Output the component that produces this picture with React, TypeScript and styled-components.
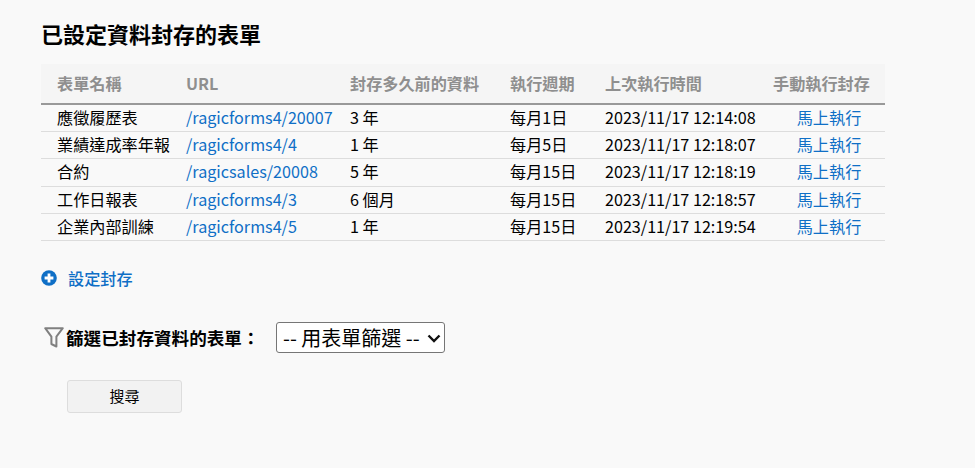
import styled, { createGlobalStyle } from "styled-components";

const GlobalStyle = createGlobalStyle`
  html, body {
    margin: 0;
    background: #f9f9f9;
  }
  body {
    font-family: "Noto Sans CJK TC", "Noto Sans", sans-serif;
    font-size: 16.15px;
    color: #000;
  }
`;

const Page = styled.div`
  width: 975px;
  height: 468px;
  padding: 20px 0 0 41px;
  box-sizing: border-box;
  overflow: hidden;
`;

const Heading = styled.h2`
  margin: 0 0 18px;
  font-size: 22px;
  font-weight: 700;
  line-height: 26px;
`;

const ArchiveTable = styled.table`
  width: 844px;
  table-layout: fixed;
  border-collapse: collapse;
`;

const HeadCell = styled.th<{ $width: number }>`
  width: ${(p) => p.$width}px;
  height: 40px;
  padding: 0 0 2px 16px;
  box-sizing: border-box;
  background: #f5f5f5;
  border-bottom: 2px solid #999;
  color: #8f8f8f;
  font-weight: 700;
  text-align: left;
  white-space: nowrap;
`;

const Cell = styled.td<{ $center?: boolean }>`
  height: 27.25px;
  padding: 0 0 1px 16px;
  box-sizing: border-box;
  border-bottom: 1px solid #ddd;
  line-height: 25px;
  white-space: nowrap;
  text-align: ${(p) => (p.$center ? "center" : "left")};
`;

const TableLink = styled.a`
  color: #0f6fc6;
  text-decoration: none;
`;

const AddLink = styled.a`
  display: flex;
  align-items: center;
  gap: 11px;
  margin-top: 25px;
  color: #0f6fc6;
  font-weight: 500;
  line-height: 24px;
  text-decoration: none;
`;

const FilterRow = styled.div`
  display: flex;
  align-items: center;
  margin: 32px 0 0 3px;
`;

const FilterLabel = styled.label`
  margin-left: 2px;
  width: 210px;
  font-size: 17.6px;
  font-weight: 700;
`;

const SelectWrap = styled.div`
  position: relative;
  width: 169px;
  height: 31px;
`;

const FormSelect = styled.select`
  appearance: none;
  width: 100%;
  height: 100%;
  padding: 0 0 0 6px;
  box-sizing: border-box;
  background: #fff;
  border: 1px solid #767676;
  border-radius: 3px;
  color: #000;
  font-family: inherit;
  font-size: 20px;
`;

const Chevron = styled.svg`
  position: absolute;
  top: 12px;
  right: 4px;
  pointer-events: none;
`;

const SearchButton = styled.button`
  display: block;
  width: 115px;
  height: 33px;
  margin: 27px 0 0 26px;
  padding: 0 0 2px;
  background: #f2f2f2;
  border: 1px solid #ddd;
  border-radius: 3px;
  color: #000;
  font-family: inherit;
  font-size: 15px;
`;

const columns = [
  { label: "表單名稱", width: 129 },
  { label: "URL", width: 164 },
  { label: "封存多久前的資料", width: 160 },
  { label: "執行週期", width: 95 },
  { label: "上次執行時間", width: 168 },
  { label: "手動執行封存", width: 128 },
];

const rows = [
  { name: "應徵履歷表", url: "/ragicforms4/20007", age: "3 年", cycle: "每月1日", last: "2023/11/17 12:14:08" },
  { name: "業績達成率年報", url: "/ragicforms4/4", age: "1 年", cycle: "每月5日", last: "2023/11/17 12:18:07" },
  { name: "合約", url: "/ragicsales/20008", age: "5 年", cycle: "每月15日", last: "2023/11/17 12:18:19" },
  { name: "工作日報表", url: "/ragicforms4/3", age: "6 個月", cycle: "每月15日", last: "2023/11/17 12:18:57" },
  { name: "企業內部訓練", url: "/ragicforms4/5", age: "1 年", cycle: "每月15日", last: "2023/11/17 12:19:54" },
];

function PlusIcon() {
  return (
    <svg width="16" height="16" viewBox="0 0 16 16">
      <circle cx="8" cy="8" r="7.8" fill="#0f6fc6" />
      <path d="M8 3.6v8.8M3.6 8h8.8" stroke="#fff" strokeWidth="2.8" />
    </svg>
  );
}

function FunnelIcon() {
  return (
    <svg width="20" height="21" viewBox="0 0 20 21">
      <path
        d="M1.2 1.2h17.6l-6.4 8.4v9.9l-5-2.5V9.6z"
        fill="none"
        stroke="#808080"
        strokeWidth="2"
        strokeLinejoin="round"
      />
    </svg>
  );
}

export default function App() {
  return (
    <Page>
      <GlobalStyle />
      <Heading>已設定資料封存的表單</Heading>
      <ArchiveTable>
        <thead>
          <tr>
            {columns.map((c) => (
              <HeadCell key={c.label} $width={c.width}>
                {c.label}
              </HeadCell>
            ))}
          </tr>
        </thead>
        <tbody>
          {rows.map((r) => (
            <tr key={r.name}>
              <Cell>{r.name}</Cell>
              <Cell>
                <TableLink href="#">{r.url}</TableLink>
              </Cell>
              <Cell>{r.age}</Cell>
              <Cell>{r.cycle}</Cell>
              <Cell>{r.last}</Cell>
              <Cell $center>
                <TableLink href="#">馬上執行</TableLink>
              </Cell>
            </tr>
          ))}
        </tbody>
      </ArchiveTable>
      <AddLink href="#">
        <PlusIcon />
        設定封存
      </AddLink>
      <FilterRow>
        <FunnelIcon />
        <FilterLabel>篩選已封存資料的表單：</FilterLabel>
        <SelectWrap>
          <FormSelect defaultValue="">
            <option value="">-- 用表單篩選 --</option>
          </FormSelect>
          <Chevron width="14" height="9" viewBox="0 0 14 9">
            <path d="M1.5 1.5 7 7l5.5-5.5" fill="none" stroke="#111" strokeWidth="2.4" />
          </Chevron>
        </SelectWrap>
      </FilterRow>
      <SearchButton>搜尋</SearchButton>
    </Page>
  );
}
